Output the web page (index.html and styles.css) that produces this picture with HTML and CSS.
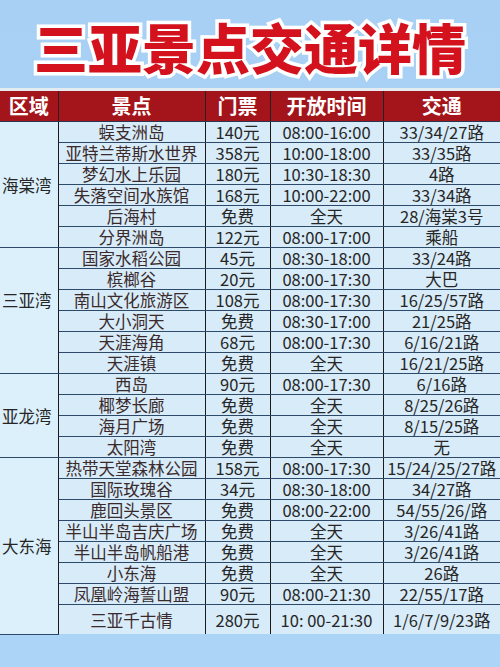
FILE: index.html
```html
<!DOCTYPE html>
<html lang="zh">
<head>
<meta charset="utf-8">
<link rel="stylesheet" href="styles.css">
</head>
<body>
<div class="page">
  <h1 class="title">三亚景点交通详情</h1>
  <table class="grid">
    <colgroup>
      <col class="c-area"><col class="c-spot"><col class="c-price"><col class="c-time"><col class="c-bus">
    </colgroup>
    <thead>
      <tr><th>区域</th><th>景点</th><th>门票</th><th>开放时间</th><th>交通</th></tr>
    </thead>
    <tbody>
      <tr><td class="area" rowspan="6">海棠湾</td><td class="spot">蜈支洲岛</td><td>140元</td><td>08:00-16:00</td><td>33/34/27路</td></tr>
      <tr><td class="spot">亚特兰蒂斯水世界</td><td>358元</td><td>10:00-18:00</td><td>33/35路</td></tr>
      <tr><td class="spot">梦幻水上乐园</td><td>180元</td><td>10:30-18:30</td><td>4路</td></tr>
      <tr><td class="spot">失落空间水族馆</td><td>168元</td><td>10:00-22:00</td><td>33/34路</td></tr>
      <tr><td class="spot">后海村</td><td>免费</td><td>全天</td><td>28/海棠3号</td></tr>
      <tr class="sec-end"><td class="spot">分界洲岛</td><td>122元</td><td>08:00-17:00</td><td>乘船</td></tr>

      <tr><td class="area area-up" rowspan="6">三亚湾</td><td class="spot">国家水稻公园</td><td>45元</td><td>08:30-18:00</td><td>33/24路</td></tr>
      <tr><td class="spot">槟榔谷</td><td>20元</td><td>08:00-17:30</td><td>大巴</td></tr>
      <tr><td class="spot">南山文化旅游区</td><td>108元</td><td>08:00-17:30</td><td>16/25/57路</td></tr>
      <tr><td class="spot">大小洞天</td><td>免费</td><td>08:30-17:00</td><td>21/25路</td></tr>
      <tr><td class="spot">天涯海角</td><td>68元</td><td>08:00-17:30</td><td>6/16/21路</td></tr>
      <tr class="sec-end"><td class="spot">天涯镇</td><td>免费</td><td>全天</td><td>16/21/25路</td></tr>

      <tr><td class="area" rowspan="4">亚龙湾</td><td class="spot">西岛</td><td>90元</td><td>08:00-17:30</td><td>6/16路</td></tr>
      <tr><td class="spot">椰梦长廊</td><td>免费</td><td>全天</td><td>8/25/26路</td></tr>
      <tr><td class="spot">海月广场</td><td>免费</td><td>全天</td><td>8/15/25路</td></tr>
      <tr class="sec-end"><td class="spot">太阳湾</td><td>免费</td><td>全天</td><td>无</td></tr>

      <tr><td class="area" rowspan="8">大东海</td><td class="spot">热带天堂森林公园</td><td>158元</td><td>08:00-17:30</td><td>15/24/25/27路</td></tr>
      <tr><td class="spot">国际玫瑰谷</td><td>34元</td><td>08:30-18:00</td><td>34/27路</td></tr>
      <tr><td class="spot">鹿回头景区</td><td>免费</td><td>08:00-22:00</td><td>54/55/26/路</td></tr>
      <tr><td class="spot">半山半岛吉庆广场</td><td>免费</td><td>全天</td><td>3/26/41路</td></tr>
      <tr><td class="spot">半山半岛帆船港</td><td>免费</td><td>全天</td><td>3/26/41路</td></tr>
      <tr><td class="spot">小东海</td><td>免费</td><td>全天</td><td>26路</td></tr>
      <tr><td class="spot">凤凰岭海誓山盟</td><td>90元</td><td>08:00-21:30</td><td>22/55/17路</td></tr>
      <tr class="last"><td class="spot">三亚千古情</td><td>280元</td><td>10: 00-21:30</td><td>1/6/7/9/23路</td></tr>
    </tbody>
  </table>
</div>
</body>
</html>
```
FILE: styles.css
```css
html, body {
  margin: 0;
  padding: 0;
  background: #aad2f5;
}
.page {
  width: 500px;
  height: 667px;
  overflow: hidden;
  background: linear-gradient(#a8d0f4, #abd4f7);
  font-family: "Noto Sans CJK SC", "Noto Sans", sans-serif;
}
.title {
  margin: 0;
  height: 88px;
  line-height: 94px;
  text-align: center;
  font-size: 54px;
  font-weight: 900;
  color: #d3121d;
  -webkit-text-stroke: 7px #ffffff;
  paint-order: stroke fill;
  letter-spacing: 0;
  border-bottom: 3px solid #e4ebf0;
}
.grid {
  width: 500px;
  table-layout: fixed;
  border-collapse: collapse;
  font-size: 16.5px;
  color: #262626;
}
.c-area { width: 58px; }
.c-spot { width: 147px; }
.c-price { width: 65px; }
.c-time { width: 113px; }
.c-bus { width: 117px; }
.grid th {
  height: 30px;
  padding: 0;
  background: #a3151a;
  color: #ffffff;
  font-size: 20px;
  font-weight: 700;
  border-left: 1.5px solid #222;
  border-right: 1.5px solid #222;
  border-bottom: 1.5px solid #2a3550;
  line-height: 1;
}
.grid th:first-child { border-left: none; }
.grid th:last-child { border-right: none; }
.grid td {
  height: 20px;
  padding: 0;
  text-align: center;
  white-space: nowrap;
  line-height: 20px;
  background: #d7ebf8;
  border-left: 1.5px solid #1b1b1b;
  border-right: 1.5px solid #1b1b1b;
  border-bottom: 1px solid #2e4a6a;
  overflow: visible;
}
.grid td:first-child { border-left: none; }
.grid td:last-child { border-right: none; }
.grid td.spot { color: #3a2a2c; }
.grid td.area {
  background: #dcf0fb;
  text-align: left;
  padding-left: 2px;
  vertical-align: middle;
  border-bottom: 1.5px solid #2e4a6a;
}
.grid td.area-up { padding-bottom: 22px; }
.grid tr.sec-end td { border-bottom: 1.5px solid #2e4a6a; }
.grid tr.last td {
  height: 29px;
  border-bottom: none;
}
```
